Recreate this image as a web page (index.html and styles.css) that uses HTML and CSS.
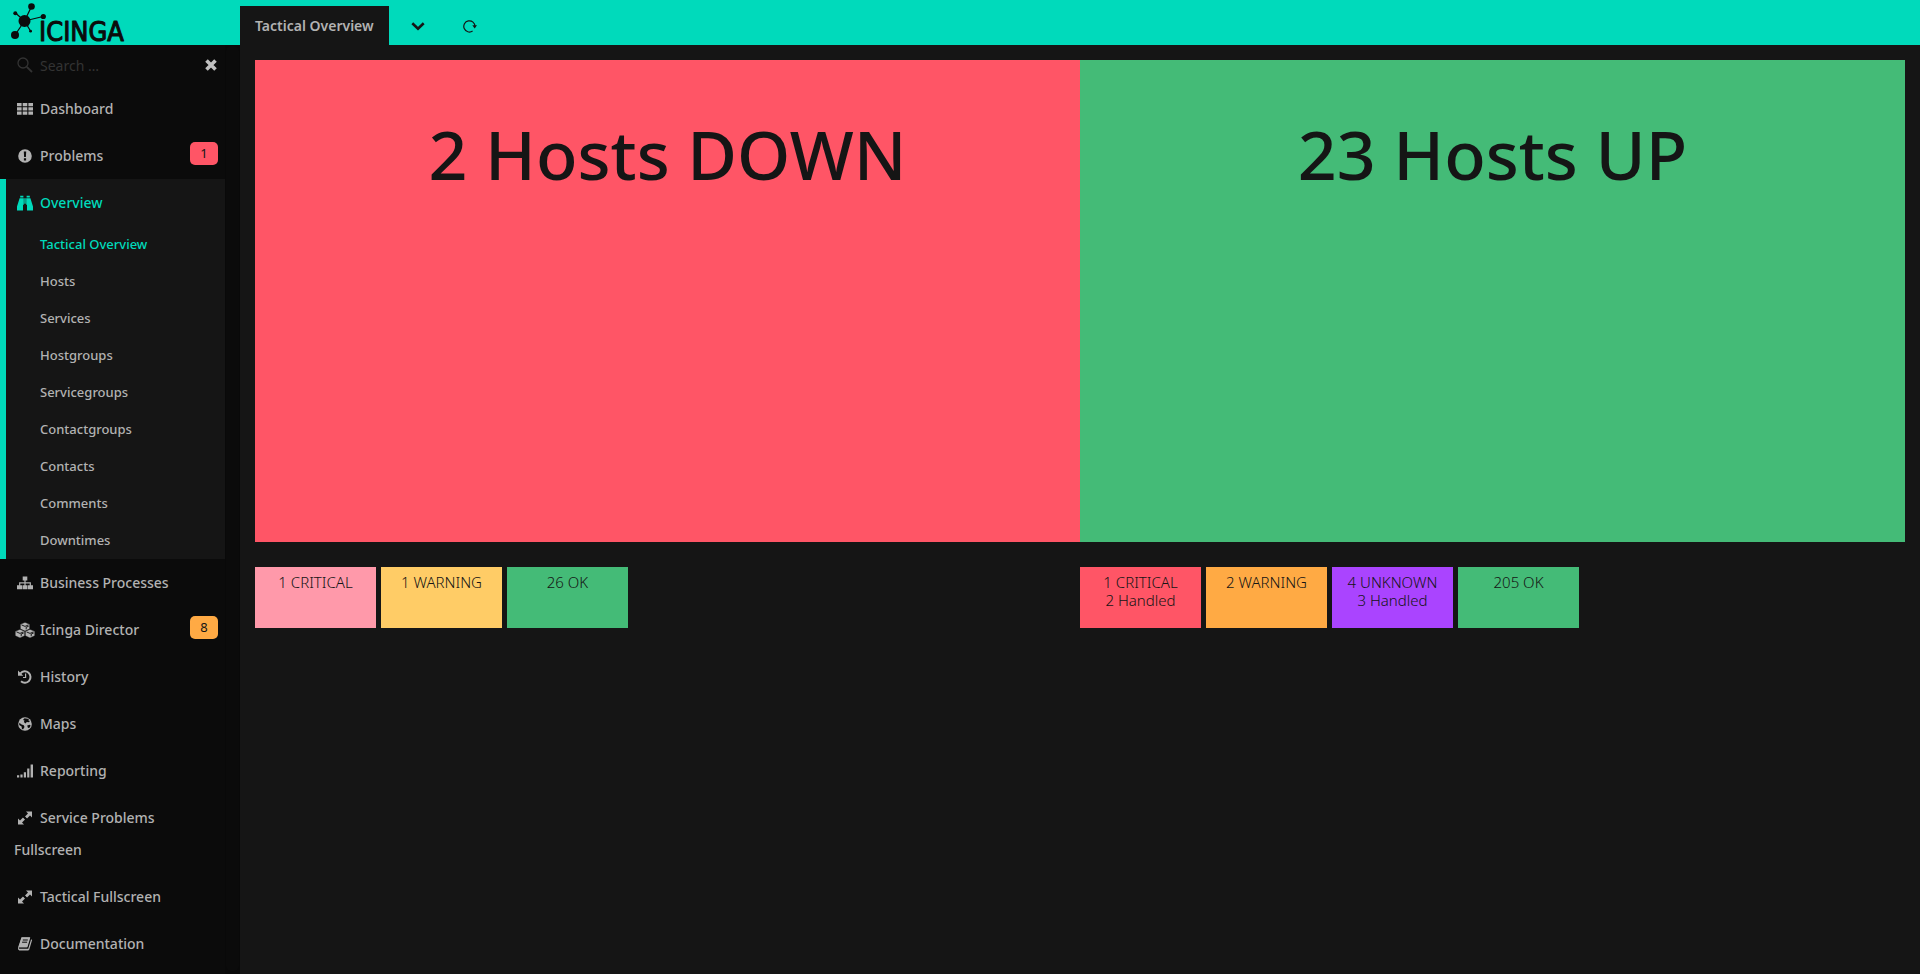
FILE: index.html
```html
<!DOCTYPE html>
<html lang="en">
<head>
<meta charset="utf-8">
<title>Tactical Overview :: Icinga Web</title>
<link rel="stylesheet" href="styles.css">
</head>
<body>
<div class="layout">
  <aside class="sidebar">
    <a class="logo" href="#" aria-label="Icinga">
      <svg width="150" height="45" viewBox="0 0 150 45">
        <g stroke="#0b0b0b" stroke-width="1.2">
          <path d="M24.500 21 31.500 6.500M24.500 21 43 16.500M24.500 21 15.500 13M24.500 21 15 35M24.500 21 30.500 31"/>
        </g>
        <g fill="#0b0b0b">
          <circle cx="24.500" cy="21" r="6"/><circle cx="31.500" cy="6.500" r="3.300"/><circle cx="43.300" cy="16.500" r="2.600"/><circle cx="15.300" cy="13.300" r="2"/><circle cx="15" cy="35" r="4"/><circle cx="30.600" cy="31.200" r="1.400"/>
          <text class="logo-text" x="39" y="41">ICINGA</text>
        </g>
      </svg>
    </a>
    <div class="sidebar-body">
      <div class="menu">
        <form class="search">
          <svg class="icon" viewBox="0 0 16 16"><circle cx="6" cy="6" r="5" fill="none" stroke="currentColor" stroke-width="1.300"/><path d="M9.800 9.800 15 15" stroke="currentColor" stroke-width="1.800"/></svg>
          <input class="search-input" type="text" placeholder="Search …" aria-label="Search">
          <button class="search-clear" type="button" aria-label="Clear search"><svg width="12" height="12" viewBox="0 0 12 12"><path d="M1.500 1.500 10.500 10.500M10.500 1.500 1.500 10.500" stroke="currentColor" stroke-width="3.600"/></svg></button>
        </form>
        <nav>
          <ul class="nav">
            <li><a class="nav-link" href="#"><svg class="icon" viewBox="0 0 16 16"><path fill="currentColor" d="M0 2h4.600v3.200H0zM5.700 2h4.600v3.200H5.700zM11.400 2H16v3.200h-4.600zM0 6.300h4.600v3.200H0zM5.700 6.300h4.600v3.200H5.700zM11.400 6.300H16v3.200h-4.600zM0 10.600h4.600v3.200H0zM5.700 10.600h4.600v3.200H5.700zM11.400 10.600H16v3.200h-4.600z"/></svg>Dashboard</a></li>
            <li><a class="nav-link" href="#"><span class="badge badge-critical">1</span><svg class="icon" viewBox="0 0 16 16"><path fill="currentColor" fill-rule="evenodd" d="M8 1.200a6.800 6.800 0 1 0 0 13.600 6.800 6.800 0 0 0 0-13.600zM6.800 3.500h2.400l-.3 5.600H7.100zM6.900 10.300h2.200v2.200H6.900z"/></svg>Problems</a></li>
            <li class="nav-active">
              <a class="nav-link" href="#"><svg class="icon" viewBox="0 0 16 16"><path fill="currentColor" d="M3.200.8h3.200v1.600H3.200zM9.600.8h3.200v1.600H9.600zM2.600 3.200h4.200v6.600H6V15.500H0V11.500zM13.400 3.200H9.200v6.600h.8v5.700h6V11.500zM7.300 3.200h1.400v5.600H7.300z"/></svg>Overview</a>
              <ul class="subnav">
                <li><a class="sub-link sub-active" href="#">Tactical Overview</a></li>
                <li><a class="sub-link" href="#">Hosts</a></li>
                <li><a class="sub-link" href="#">Services</a></li>
                <li><a class="sub-link" href="#">Hostgroups</a></li>
                <li><a class="sub-link" href="#">Servicegroups</a></li>
                <li><a class="sub-link" href="#">Contactgroups</a></li>
                <li><a class="sub-link" href="#">Contacts</a></li>
                <li><a class="sub-link" href="#">Comments</a></li>
                <li><a class="sub-link" href="#">Downtimes</a></li>
              </ul>
            </li>
            <li><a class="nav-link" href="#"><svg class="icon" viewBox="0 0 16 16"><path fill="currentColor" d="M5.700 1.500h4.600v4H8.600v1.700h5.300v3h2.100v4h-5v-4h1.700V8.400H8.600v1.800h1.900v4h-5v-4h1.900V8.400H3.300v1.800H5v4H0v-4h2.100v-3h5.300V5.500H5.700z"/></svg>Business Processes</a></li>
            <li><a class="nav-link" href="#"><span class="badge badge-warning">8</span><svg class="icon icon-wide" viewBox="0 0 20 16"><g fill="currentColor" stroke="#0b0b0b" stroke-width=".5"><path d="M10 .3 14.700 2.200v4.800L10 9.200 5.300 7V2.200zM5 7.300l4.800 1.900v4.600L5 16 .2 13.800V9.200zM15 7.300l4.800 1.900v4.600L15 16l-4.800-2.200V9.200z"/></g><path fill="none" stroke="#0b0b0b" stroke-width=".9" d="M6.500 2.900 10 4.400l3.500-1.500M11.200 7.400V5.200l2.500-1M1.500 9.900 5 11.400l3.500-1.500M6.200 14.200V12l2.500-1M11.500 9.900l3.500 1.500 3.500-1.500M16.200 14.200V12l2.500-1"/></svg>Icinga Director</a></li>
            <li><a class="nav-link" href="#"><svg class="icon" viewBox="0 0 16 16"><path fill="none" stroke="currentColor" stroke-width="2" d="M3.500 4.300A5.700 5.700 0 1 1 4 12.300"/><path fill="currentColor" d="M1 1.500v5.300h5.300z"/><path fill="none" stroke="currentColor" stroke-width="1.200" d="M8.600 4.500v4H6"/></svg>History</a></li>
            <li><a class="nav-link" href="#"><svg class="icon" viewBox="0 0 16 16"><circle cx="8" cy="8" r="6.800" fill="currentColor"/><path fill="#0b0b0b" d="M7.500 2.200 12 3l-.8 1.300 1.600.7-.8 1.300-2.200-.4-1.400 1.600-1.500-1.500.6-1.600-1.500-.5zM2.300 6.800l2.300 1.800 2.200.6.700 1.700-1.500 2.600-1.100-.8-.3-2.200-2.400-1.500zM10.200 9.500l2.500-.7 1 .9-1.500 2.300-1.300-.3z"/></svg>Maps</a></li>
            <li><a class="nav-link" href="#"><svg class="icon" viewBox="0 0 16 16"><path fill="currentColor" d="M0 12.300h2.200v2.200H0zM3.400 11.400h2.200v3.100H3.400zM6.800 9.300H9v5.200H6.800zM10.200 5.600h2.200v8.900h-2.200zM13.600 1.500H16v13h-2.400z"/></svg>Reporting</a></li>
            <li><a class="nav-link" href="#"><svg class="icon" viewBox="0 0 16 16"><path fill="currentColor" d="M9 1.500h6v6l-2-2L10 8.500 8 6.500l3-3zM7 14.500H1v-6l2 2 3-3 2 2-3 3z"/><path stroke="#0b0b0b" stroke-width="1.200" d="M6 6l4 4"/></svg>Service Problems Fullscreen</a></li>
            <li><a class="nav-link" href="#"><svg class="icon" viewBox="0 0 16 16"><path fill="currentColor" d="M9 1.500h6v6l-2-2L10 8.500 8 6.500l3-3zM7 14.500H1v-6l2 2 3-3 2 2-3 3z"/><path stroke="#0b0b0b" stroke-width="1.200" d="M6 6l4 4"/></svg>Tactical Fullscreen</a></li>
            <li><a class="nav-link" href="#"><svg class="icon" viewBox="0 0 16 16"><path fill="currentColor" d="M4.600 1.200h8.600l-.2 1.200-2.600 8.900H2.200L1.600 12l.8.800h8.800l2.900-9.600 1 .8-2.900 9.700-1 .9H2.300L1 13.200l.1-2z"/><path fill="currentColor" d="M4.500 1.600h8.200l-2.800 9.700H1.700z"/><path stroke="#0b0b0b" stroke-width="1" d="M5.800 4h5M5.100 6.200h5"/></svg>Documentation</a></li>
          </ul>
        </nav>
      </div>
      <div class="scroll-track"><div class="scroll-thumb"></div></div>
    </div>
  </aside>
  <div class="content">
    <header class="tabs">
      <a class="tab" href="#">Tactical Overview</a>
      <button class="tab-button" type="button" aria-label="More"><svg width="14" height="14" viewBox="0 0 14 14"><path fill="none" stroke="currentColor" stroke-width="2.600" d="M1.300 4.300 7 9.700l5.700-5.400"/></svg></button>
      <button class="tab-button" type="button" aria-label="Reload"><svg width="14" height="14" viewBox="0 0 14 14"><path fill="none" stroke="currentColor" stroke-width="1.200" d="M9.600 12A5.600 5.600 0 1 1 12 7.500"/><path fill="currentColor" d="M9.300 6.300h4.700L11.700 9.500z"/></svg></button>
    </header>
    <main class="overview">
      <section class="column">
        <a class="hosts hosts-down" href="#">2 Hosts DOWN</a>
        <div class="tiles">
          <a class="tile critical-handled" href="#">1 CRITICAL</a>
          <a class="tile warning-handled" href="#">1 WARNING</a>
          <a class="tile ok" href="#">26 OK</a>
        </div>
      </section>
      <section class="column">
        <a class="hosts hosts-up" href="#">23 Hosts UP</a>
        <div class="tiles">
          <a class="tile critical" href="#">1 CRITICAL<br>2 Handled</a>
          <a class="tile warning" href="#">2 WARNING</a>
          <a class="tile unknown" href="#">4 UNKNOWN<br>3 Handled</a>
          <a class="tile ok" href="#">205 OK</a>
        </div>
      </section>
    </main>
  </div>
</div>
</body>
</html>
```
FILE: styles.css
```css
:root {
  --accent: #00dabb;
  --bg: #151515;
  --bg-menu: #0b0b0b;
  --text: #b2b2b2;
}

* { box-sizing: border-box; }

body {
  margin: 0;
  background: var(--bg);
  color: var(--text);
  font-family: "Noto Sans", "Open Sans", sans-serif;
  font-size: 14px;
}

a { color: inherit; text-decoration: none; }
button { border: 0; padding: 0; background: none; color: inherit; cursor: pointer; }
ul { list-style: none; margin: 0; padding: 0; }

.layout { display: flex; min-height: 100vh; }

.sidebar {
  flex: 0 0 240px;
  min-width: 0;
  display: flex;
  flex-direction: column;
  background: var(--bg-menu);
}

.logo { display: block; height: 45px; background: var(--accent); }
.logo svg { display: block; overflow: visible; }
.logo-text {
  font: 400 27px "DejaVu Sans Condensed", "DejaVu Sans", sans-serif;
  stroke: #0b0b0b;
  stroke-width: 1px;
  stroke-linejoin: round;
}

.sidebar-body { flex: 1; display: flex; }
.menu { flex: 1; min-width: 0; }

.scroll-track { flex: 0 0 15px; display: flex; background: #090909; }
.scroll-thumb { flex: 1; margin: 1px 1px 3px; border-radius: 5px; background: #0b0b0b; }

.search {
  display: flex;
  align-items: center;
  height: 40px;
  padding: 0 7px 0 14px;
  color: #333;
}
.search .icon { flex: none; }
.search-input {
  flex: 1;
  width: 0;
  padding: 0;
  border: 0;
  outline: 0;
  background: none;
  color: var(--text);
  font: inherit;
}
.search-input::placeholder { color: #333; opacity: 1; }
.search-clear { display: flex; padding: 1px; color: #c0c0c0; }

.icon {
  width: 16px;
  height: 16px;
  margin: 0 7px 0 3px;
  vertical-align: -3px;
}
.icon-wide { width: 20px; margin: 0 5px 0 1px; }

.nav { font-weight: 500; }
.nav-link { display: block; padding: 8px 7px 7px 14px; line-height: 32px; }
.nav-active {
  background: linear-gradient(to right, var(--accent) 6px, var(--bg) 6px);
}
.nav-active > .nav-link, .sub-active { color: var(--accent); }
.sub-link { display: block; padding-left: 40px; font-size: 13px; line-height: 37px; }

.badge {
  float: right;
  width: 28px;
  margin-top: 2px;
  border-radius: 5px;
  color: #151515;
  font-size: 13px;
  font-weight: 400;
  line-height: 23px;
  text-align: center;
}
.badge-critical { background: #ff5566; }
.badge-warning { background: #ffaa44; }

.content { flex: 1; min-width: 0; }

.tabs {
  display: flex;
  align-items: stretch;
  height: 45px;
  padding-top: 6px;
  background: var(--accent);
  color: #151515;
}
.tab {
  padding: 0 15px;
  background: var(--bg);
  color: var(--text);
  font-weight: 600;
  line-height: 39px;
}
.tab-button { display: flex; align-items: center; justify-content: center; width: 52px; margin-left: 3px; }
.tab-button + .tab-button { margin-left: 0; }

.overview { display: grid; grid-template-columns: 1fr 1fr; padding: 15px; }

.hosts {
  display: block;
  height: 482px;
  padding-top: 46px;
  color: #151515;
  font-size: 68px;
  font-weight: 500;
  line-height: 96px;
  text-align: center;
}
.hosts-down { background: #ff5566; }
.hosts-up { background: #44bb77; }

.tiles { display: flex; gap: 5px; margin-top: 25px; }
.tile {
  width: 121px;
  height: 61px;
  padding-top: 6px;
  color: #151515;
  font-size: 15px;
  font-weight: 300;
  line-height: 18px;
  text-align: center;
}
.critical { background: #ff5566; }
.critical-handled { background: #ff99aa; }
.warning { background: #ffaa44; }
.warning-handled { background: #ffcc66; }
.unknown { background: #aa44ff; }
.ok { background: #44bb77; }
```
